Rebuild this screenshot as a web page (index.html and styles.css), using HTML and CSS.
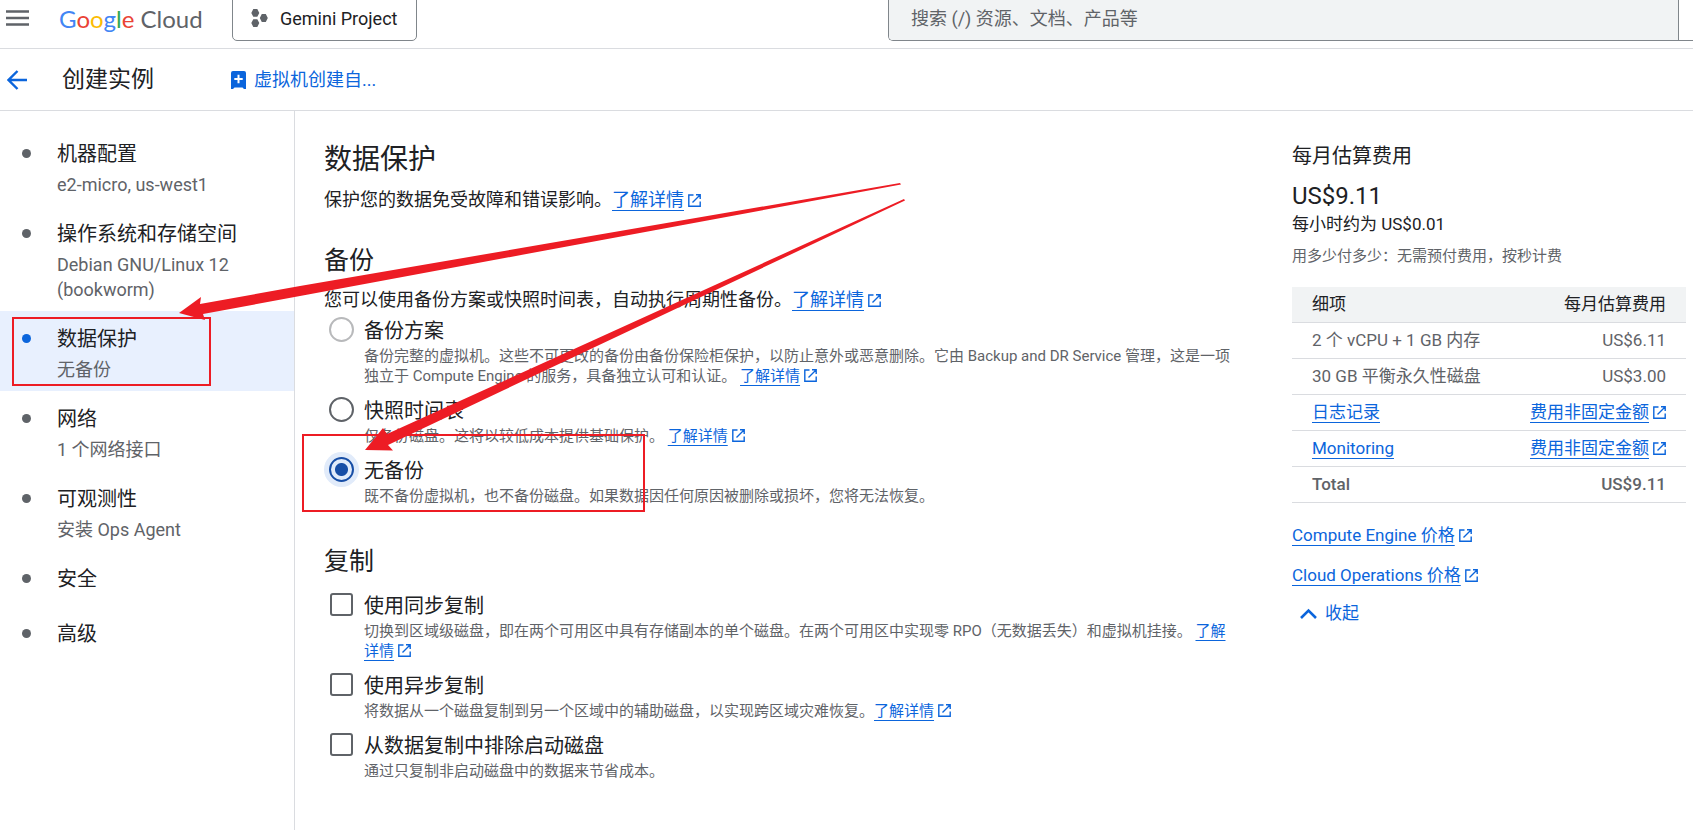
FILE: index.html
```
<!DOCTYPE html>
<html lang="zh-CN">
<head>
  <meta charset="UTF-8">
  <title>创建实例 – Compute Engine – Google Cloud</title>
  <link rel="stylesheet" href="styles.css">
</head>
<body>
  <svg class="defs" width="0" height="0" aria-hidden="true">
    <symbol id="open" viewBox="0 0 13 13">
      <path d="M5.5 1H.8v11.2h11.4V7.5M8 .8h4.2V5M12 1L4.5 8.5" fill="none" stroke="currentColor" stroke-width="1.4"/>
    </symbol>
  </svg>

  <header class="topbar">
    <div class="brand">
      <button class="icon-btn menu" aria-label="主菜单">
        <svg width="23" height="16" viewBox="0 0 23 16"><path d="M0 1.5h23M0 8h23M0 14.5h23" stroke="#5f6368" stroke-width="2.4"/></svg>
      </button>
      <a href="#" class="logo"><span class="g-blue">G</span><span class="g-red">o</span><span class="g-yellow">o</span><span class="g-blue">g</span><span class="g-green">l</span><span class="g-red">e</span> Cloud</a>
      <button class="project">
        <svg width="17" height="18" viewBox="0 0 17 18" fill="#5f6368">
          <path d="M2.3 0h4l2 3.9-2 3.9h-4l-2-3.9zM2.3 10.2h4l2 3.9-2 3.9h-4l-2-3.9zM10.8 5.1h4l2 3.9-2 3.9h-4l-2-3.9z"/>
        </svg>
        Gemini Project
      </button>
    </div>
    <form class="search">
      <input type="text" aria-label="搜索" placeholder="搜索 (/) 资源、文档、产品等">
    </form>
  </header>

  <div class="titlebar">
    <a href="#" class="back" aria-label="返回">
      <svg width="20" height="20" viewBox="0 0 20 20"><path d="M20 10H2M10.500 1L1.500 10l9 9" fill="none" stroke="#0b65dc" stroke-width="2.400"/></svg>
    </a>
    <h1>创建实例</h1>
    <button class="template">
      <svg width="15" height="18" viewBox="0 0 15 18">
        <path d="M2 0h11a2 2 0 0 1 2 2v16h-2l-1.500-1.500h-8L2 18H0V2a2 2 0 0 1 2-2z" fill="#0b65dc"/>
        <path d="M7.500 3.800v8.400M3.300 8h8.400" stroke="#fff" stroke-width="2"/>
      </svg>
      虚拟机创建自...
    </button>
  </div>

  <div class="layout">
    <nav class="steps">
      <a href="#" class="step"><b>机器配置</b><span>e2-micro, us-west1</span></a>
      <a href="#" class="step"><b>操作系统和存储空间</b><span>Debian GNU/Linux 12 (bookworm)</span></a>
      <a href="#" class="step active"><b>数据保护</b><span>无备份</span></a>
      <a href="#" class="step"><b>网络</b><span>1 个网络接口</span></a>
      <a href="#" class="step"><b>可观测性</b><span>安装 Ops Agent</span></a>
      <a href="#" class="step short"><b>安全</b></a>
      <a href="#" class="step short"><b>高级</b></a>
    </nav>

    <main class="content">
      <h2>数据保护</h2>
      <p>保护您的数据免受故障和错误影响。<a href="#">了解详情</a><svg class="ext"><use href="#open"/></svg></p>

      <h3>备份</h3>
      <p>您可以使用备份方案或快照时间表，自动执行周期性备份。<a href="#">了解详情</a><svg class="ext"><use href="#open"/></svg></p>
      <div class="options">
        <div class="option">
          <input type="radio" name="backup" id="plan" disabled>
          <label for="plan">备份方案</label>
          <div class="hint">备份完整的虚拟机。这些不可更改的备份由备份保险柜保护，以防止意外或恶意删除。它由 Backup and DR Service 管理，这是一项独立于 Compute Engine 的服务，具备独立认可和认证。 <a href="#">了解详情</a><svg class="ext"><use href="#open"/></svg></div>
        </div>
        <div class="option">
          <input type="radio" name="backup" id="snapshot">
          <label for="snapshot">快照时间表</label>
          <div class="hint">仅备份磁盘。这将以较低成本提供基础保护。 <a href="#">了解详情</a><svg class="ext"><use href="#open"/></svg></div>
        </div>
        <div class="option">
          <input type="radio" name="backup" id="none" checked>
          <label for="none">无备份</label>
          <div class="hint">既不备份虚拟机，也不备份磁盘。如果数据因任何原因被删除或损坏，您将无法恢复。</div>
        </div>
      </div>

      <h3>复制</h3>
      <div class="options replication">
        <div class="option">
          <input type="checkbox" id="sync">
          <label for="sync">使用同步复制</label>
          <div class="hint">切换到区域级磁盘，即在两个可用区中具有存储副本的单个磁盘。在两个可用区中实现零 RPO（无数据丢失）和虚拟机挂接。 <a href="#">了解详情</a><svg class="ext"><use href="#open"/></svg></div>
        </div>
        <div class="option">
          <input type="checkbox" id="async">
          <label for="async">使用异步复制</label>
          <div class="hint">将数据从一个磁盘复制到另一个区域中的辅助磁盘，以实现跨区域灾难恢复。<a href="#">了解详情</a><svg class="ext"><use href="#open"/></svg></div>
        </div>
        <div class="option">
          <input type="checkbox" id="exclude">
          <label for="exclude">从数据复制中排除启动磁盘</label>
          <div class="hint">通过只复制非启动磁盘中的数据来节省成本。</div>
        </div>
      </div>
    </main>

    <aside class="cost">
      <h4>每月估算费用</h4>
      <div class="price">US$9.11</div>
      <div class="hourly">每小时约为 US$0.01</div>
      <div class="note">用多少付多少：无需预付费用，按秒计费</div>
      <table>
        <thead>
          <tr><th>细项</th><th>每月估算费用</th></tr>
        </thead>
        <tbody>
          <tr><td>2 个 vCPU + 1 GB 内存</td><td>US$6.11</td></tr>
          <tr><td>30 GB 平衡永久性磁盘</td><td>US$3.00</td></tr>
          <tr><td><a href="#">日志记录</a></td><td><a href="#">费用非固定金额</a><svg class="ext"><use href="#open"/></svg></td></tr>
          <tr><td><a href="#">Monitoring</a></td><td><a href="#">费用非固定金额</a><svg class="ext"><use href="#open"/></svg></td></tr>
          <tr class="total"><td>Total</td><td>US$9.11</td></tr>
        </tbody>
      </table>
      <div class="more"><a href="#">Compute Engine 价格</a><svg class="ext"><use href="#open"/></svg></div>
      <div class="more"><a href="#">Cloud Operations 价格</a><svg class="ext"><use href="#open"/></svg></div>
      <button class="collapse">
        <svg width="17" height="11" viewBox="0 0 17 11"><path d="M1 10l7.500-7.500L16 10" fill="none" stroke="#0b65dc" stroke-width="2.600"/></svg>
        收起
      </button>
    </aside>
  </div>

  <!-- red markup drawn over the page -->
  <svg class="marks" width="1693" height="830" viewBox="0 0 1693 830" aria-hidden="true">
    <g fill="none" stroke="#ed1c24" stroke-width="2">
      <rect x="13" y="318" width="197" height="67"/>
      <rect x="303" y="435" width="341" height="76"/>
    </g>
    <g fill="#ed1c24">
      <path d="M179 313L201 297L200 304L300 286L900 183L901 184.500L300 296L203 314L205 320z"/>
      <path d="M365 450L383 428L387 434L484 390L904 199L905 200.500L504 390L388 445L393 450.500z"/>
    </g>
  </svg>
</body>
</html>
```
FILE: styles.css
```
* {margin: 0; padding: 0; box-sizing: border-box;}
body {position: relative; min-height: 100vh; overflow-x: hidden; background: #fff; color: #202124; font-family: Roboto, 'Noto Sans CJK SC', sans-serif; font-size: 18px; line-height: 25px;}
button, input {font: inherit; color: inherit;}
button {border: none; background: none; cursor: pointer;}
a {color: #0b65dc; text-decoration: underline; text-decoration-thickness: 1px; text-underline-offset: 4px; text-decoration-skip-ink: none;}
h1, h2, h3, h4 {font-weight: 400;}
.defs {position: absolute;}
.ext {width: 13px; height: 13px; margin-left: 4px; vertical-align: -1px; color: #0b65dc;}

/* top bar */
.topbar {display: grid; grid-template-columns: 888fr 805fr; grid-template-rows: 100%; height: 49px; padding-bottom: 12px; align-items: center; border-bottom: 1px solid #dadce0; overflow: hidden;}
.brand {display: flex; align-items: center;}
.icon-btn {display: flex;}
.menu {margin-left: 6px;}
.logo {width: 173px; margin-left: 30px; font-family: Lato, sans-serif; font-size: 24px; color: #5f6368; text-decoration: none; white-space: nowrap;}
.g-blue {color: #4285f4;}
.g-red {color: #ea4335;}
.g-yellow {color: #fbbc04;}
.g-green {color: #34a853;}
.project {display: flex; align-items: center; gap: 12px; height: 46px; padding: 0 19px 0 18px; border: 1px solid #80868b; border-radius: 5px;}
.search {height: 46px; border: 1px solid #80868b; border-right: none; border-radius: 5px 0 0 5px; overflow: hidden; padding-right: 14px;}
.search input {width: 100%; height: 100%; padding: 0 22px; border: none; border-right: 1px solid #80868b; background: #f1f3f4;}
.search input::placeholder {color: #5f6368;}

/* title bar */
.titlebar {display: flex; align-items: center; height: 62px; padding-left: 7px; border-bottom: 1px solid #dadce0;}
.back {display: flex;}
.titlebar h1 {margin-left: 35px; font-size: 23px;}
.template {display: flex; align-items: center; gap: 8px; margin-left: 77px; color: #0b65dc;}

.layout {display: flex; min-height: calc(100vh - 111px);}

/* steps */
.steps {flex: 0 0 295px; padding-top: 15px; border-right: 1px solid #dadce0;}
.step {display: block; position: relative; padding: 16px 57px 9px; color: #5f6368; text-decoration: none;}
.step::before {content: ""; position: absolute; left: 22px; top: 23px; width: 9px; height: 9px; border-radius: 50%; background: #5f6368;}
.step b {display: block; margin-right: -50px; font-size: 20px; font-weight: 400; color: #202124;}
.step span {display: block; margin: 5px -20px 0 0;}
.step.short {padding-bottom: 14px;}
.active {background: #e8f0fe;}
.active::before {background: #0b65dc;}

/* content */
.content {flex: 1; min-width: 0; padding: 29px 52px 40px 29px;}
.content h2 {margin-bottom: 7px; font-size: 28px; line-height: 40px;}
.content h3 {margin: 34px 0 11px; font-size: 25px; line-height: 30px;}
.options {display: grid; gap: 10px; margin: 4px 0 41px 5px;}
.replication {margin-top: 14px;}
.option {display: grid; grid-template-columns: 25px 1fr; column-gap: 10px;}
.option label {font-size: 20px; line-height: 30px;}
.option input {appearance: none; justify-self: center; align-self: center; margin-bottom: 4px; border: 2px solid #5f6368;}
.option input[type=radio] {width: 25px; height: 25px; border-radius: 50%;}
.option input[type=checkbox] {width: 23px; height: 23px; border-radius: 3px;}
.option input:disabled {border-color: #b8b9bb;}
.option input:checked {border-color: #174ea6; background: radial-gradient(circle, #174ea6 6px, #e1ebfa 7px); box-shadow: 0 0 0 5px #e1ebfa;}
.hint {grid-column: 2; font-size: 15px; line-height: 20px; color: #5f6368;}

/* cost summary */
.cost {flex: 0 0 394px; margin-right: 7px; padding-top: 33px; font-size: 17px;}
.cost h4 {font-size: 20px;}
.price {margin-top: 15px; font-size: 24px;}
.hourly {margin-top: 3px;}
.note {margin: 7px 0 18px; font-size: 15px; color: #5f6368;}
table {width: 100%; border-collapse: collapse;}
th, td {height: 36px; padding: 0 20px; border-bottom: 1px solid #dadce0; text-align: left; font-weight: 400; color: #5f6368; white-space: nowrap;}
th {height: 35px; background: #f1f3f4; color: #202124;}
th:last-child, td:last-child {text-align: right;}
.total td {font-weight: 500;}
.more {margin-top: 15px;}
table + .more {margin-top: 20px;}
.collapse {display: flex; align-items: center; gap: 8px; margin: 13px 0 0 8px; color: #0b65dc;}

.marks {position: absolute; left: 0; top: 0; pointer-events: none;}
```
